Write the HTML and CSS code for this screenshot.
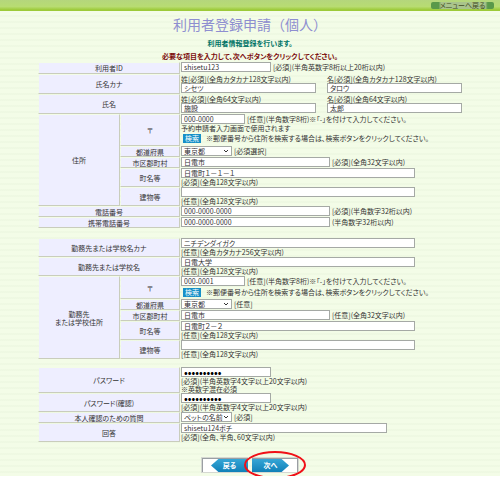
FILE: index.html
```html
<!DOCTYPE html>
<html lang="ja">
<head>
<meta charset="utf-8">
<title>利用者登録申請&#65288;個人&#65289;</title>
<link rel="stylesheet" href="styles.css">
</head>
<body>
<header class="topbar"><a class="menu" href="#">メニューへ戻る</a></header>
<main>
<h1>利用者登録申請&#65288;個人&#65289;</h1>
<p class="lead">利用者情報登録を行います。</p>
<p class="notice">必要な項目を入力して、次へボタンをクリックしてください。</p>
<form>
<table>
<colgroup><col class="c1"><col class="c2"><col></colgroup>
<tr class="id"><th colspan="2"><label for="uid">利用者ID</label></th><td><div class="line"><input class="w-id" id="uid" value="shisetu123"><span>[必須](半角英数字8桁以上20桁以内)</span></div></td></tr>
<tr class="name"><th colspan="2">氏名カナ</th><td><div class="pair"><label>姓[必須](全角カタカナ128文字以内)<input value="シセツ"></label><label>名[必須](全角カタカナ128文字以内)<input value="タロウ"></label></div></td></tr>
<tr class="name"><th colspan="2">氏名</th><td><div class="pair"><label>姓[必須](全角64文字以内)<input value="施設"></label><label>名[必須](全角64文字以内)<input value="太郎"></label></div></td></tr>
<tr class="zip-long"><th rowspan="5">住所</th><th><label for="zip">〒</label></th><td><div class="line"><input class="w-zip" id="zip" value="000-0000"><span>[任意](半角数字8桁)※「-」を付けて入力してください。</span></div><div>予約申請者入力画面で使用されます</div><div class="find"><button type="button">検索</button><span>※郵便番号から住所を検索する場合は、検索ボタンをクリックしてください。</span></div></td></tr>
<tr class="single"><th><label for="pref">都道府県</label></th><td><div class="line"><select id="pref"><option>東京都</option></select><span>[必須選択]</span></div></td></tr>
<tr class="single"><th><label for="city">市区郡町村</label></th><td><div class="line"><input class="w-mid" id="city" value="日電市"><span>[必須](全角32文字以内)</span></div></td></tr>
<tr class="double"><th><label for="town">町名等</label></th><td><input class="w-long" id="town" value="日電町&#65297;&#65293;&#65297;&#65293;&#65297;"><div>[必須](全角128文字以内)</div></td></tr>
<tr class="double"><th><label for="bldg">建物等</label></th><td><input class="w-long" id="bldg"><div>[任意](全角128文字以内)</div></td></tr>
<tr class="single"><th colspan="2"><label for="tel">電話番号</label></th><td><div class="line"><input class="w-mid" id="tel" value="000-0000-0000"><span>[必須](半角数字32桁以内)</span></div></td></tr>
<tr class="single"><th colspan="2"><label for="mobile">携帯電話番号</label></th><td><div class="line"><input class="w-mid" id="mobile" value="000-0000-0000"><span>(半角数字32桁以内)</span></div></td></tr>
</table>
<table class="work">
<colgroup><col class="c1"><col class="c2"><col></colgroup>
<tr class="double"><th colspan="2"><label for="workkana">勤務先または学校名カナ</label></th><td><input class="w-long" id="workkana" value="ニチデンダイガク"><div>[任意](全角カタカナ256文字以内)</div></td></tr>
<tr class="double"><th colspan="2"><label for="work">勤務先または学校名</label></th><td><input class="w-long" id="work" value="日電大学"><div>[任意](全角128文字以内)</div></td></tr>
<tr class="zip-short"><th rowspan="5">勤務先<br>または学校住所</th><th><label for="wzip">〒</label></th><td><div class="line"><input class="w-zip" id="wzip" value="000-0001"><span>[任意](半角数字8桁)※「-」を付けて入力してください。</span></div><div class="find"><button type="button">検索</button><span>※郵便番号から住所を検索する場合は、検索ボタンをクリックしてください。</span></div></td></tr>
<tr class="single"><th><label for="wpref">都道府県</label></th><td><div class="line"><select id="wpref"><option>東京都</option></select><span>[任意]</span></div></td></tr>
<tr class="single"><th><label for="wcity">市区郡町村</label></th><td><div class="line"><input class="w-mid" id="wcity" value="日電市"><span>[任意](全角32文字以内)</span></div></td></tr>
<tr class="double"><th><label for="wtown">町名等</label></th><td><input class="w-long" id="wtown" value="日電町&#65298;&#65293;&#65298;"><div>[任意](全角128文字以内)</div></td></tr>
<tr class="double"><th><label for="wbldg">建物等</label></th><td><input class="w-long" id="wbldg"><div>[任意](全角128文字以内)</div></td></tr>
</table>
<table>
<colgroup><col class="c1"><col class="c2"><col></colgroup>
<tr class="triple"><th colspan="2"><label for="pw">パスワード</label></th><td><input class="w-id" type="password" id="pw" value="abcdefghij"><div>[必須](半角英数字4文字以上20文字以内)</div><div>※英数字混在必須</div></td></tr>
<tr class="double"><th colspan="2"><label for="pw2">パスワード(確認)</label></th><td><input class="w-id" type="password" id="pw2" value="abcdefghij"><div>[必須](半角英数字4文字以上20文字以内)</div></td></tr>
<tr class="single"><th colspan="2"><label for="q">本人確認のための質問</label></th><td><div class="line"><select id="q"><option>ペットの名前</option></select><span>[必須]</span></div></td></tr>
<tr class="double"><th colspan="2"><label for="ans">回答</label></th><td><input class="w-ans" id="ans" value="shisetu124ポチ"><div>[必須](全角、半角、60文字以内)</div></td></tr>
</table>
<div class="actions">
<button type="button" class="nav back"><span>戻る</span></button>
<div class="marked">
<button type="button" class="nav next"><span>次へ</span></button>
<svg class="ring" viewBox="0 0 64 30" aria-hidden="true"><ellipse cx="32" cy="15" rx="30" ry="13" fill="none" stroke="#f01018" stroke-width="2"/></svg>
</div>
</div>
</form>
</main>
</body>
</html>
```

FILE: styles.css
```css
* { box-sizing: border-box; }
body {
  margin: 0;
  background: #fff;
  color: #333;
  font: 7px/8px "Noto Sans CJK JP", sans-serif;
  font-feature-settings: "palt";
}
.topbar {
  display: flex;
  justify-content: flex-end;
  height: 11px;
  padding: 2px 6px 0 0;
  background: linear-gradient(#b4d67c, #b8dc72 60%, #9cca38 90%);
}
.menu {
  width: 63px;
  height: 7px;
  border-radius: 2px;
  background: linear-gradient(90deg, #5a994a 12%, #a9c38c 16%, #a9c38c 86%, #5a994a 90%);
  color: #3f4a20;
  line-height: 7px;
  text-align: center;
  text-decoration: none;
}
main {
  padding: 3px 38px;
  background: repeating-linear-gradient(#f3fce7 0, #f3fce7 4px, #eaf5de 5px, #f3fce7 6px);
}
h1 {
  margin: 0;
  color: #8e8ed0;
  font-size: 14px;
  font-weight: 400;
  font-feature-settings: normal;
  line-height: 20px;
  text-align: center;
}
p { margin: 0; font-weight: 700; text-align: center; }
.lead { padding-top: 5px; color: #007466; }
.notice { padding: 5px 0 2px; color: #7c0c0c; }
table { width: 100%; table-layout: fixed; border-spacing: 0; margin-bottom: 10px; }
.work { margin-bottom: 8px; }
.c1 { width: 82px; }
.c2 { width: 60px; }
th {
  padding: 0;
  border: 1px solid transparent;
  border-right-color: #c9cdbc;
  border-bottom-color: #c9cdbc;
  background: #eeeeff;
  background-clip: padding-box;
  font-weight: 400;
  line-height: 8px;
}
td { padding: 0 0 0 1px; vertical-align: top; white-space: nowrap; }
.id { height: 12px; }
.name { height: 20px; }
.zip-long { height: 32px; }
.zip-short { height: 23px; }
.single { height: 11px; }
.double { height: 19px; }
.triple { height: 26px; }
.line, .find { display: flex; align-items: center; gap: 2px; height: 10px; }
.find { gap: 5px; height: 12px; padding-left: 2px; }
.pair { display: flex; gap: 11px; padding-top: 1px; }
.pair label { width: 135px; }
input, select {
  display: block;
  height: 10px;
  margin: 0;
  padding: 0 2px;
  border: 1px solid #a5a9a5;
  border-radius: 0;
  background: #fff;
  color: #333;
  font: inherit;
  font-feature-settings: inherit;
}
input[type="password"] { color: #000; font-size: 11px; line-height: 8px; }
.pair input { width: 100%; }
.w-id { width: 90px; }
.w-zip { width: 64px; }
.w-mid { width: 149px; }
.w-long { width: 234px; }
.w-ans { width: 206px; }
select {
  width: 51px;
  appearance: none;
  background: #fff url("data:image/svg+xml,%3Csvg xmlns='http://www.w3.org/2000/svg' viewBox='0 0 6 4'%3E%3Cpath d='M1 1l2 2 2-2' fill='none' stroke='%23333'/%3E%3C/svg%3E") no-repeat right 2px center / 6px 4px;
}
button { margin: 0; padding: 0; border: 0; font: inherit; color: #fff; }
.find button { width: 18px; height: 9px; background: #1690c8; line-height: 8px; }
.actions { display: flex; justify-content: center; gap: 4px; margin-top: 15px; }
.nav {
  display: flex;
  width: 47px;
  height: 16px;
  padding: 1px;
  border: 1px solid #d5d8d2;
  background: #fff;
  box-shadow: inset 1px 1px #9a9fa3;
}
.nav span {
  width: 37px;
  height: 13px;
  background: linear-gradient(#36a6d6, #1080b8);
  font-weight: 700;
  line-height: 13px;
}
.back { justify-content: flex-end; border-right: 0; padding-right: 0; }
.back span { clip-path: polygon(0 50%, 20% 0, 100% 0, 100% 100%, 20% 100%); }
.next { border-left: 0; padding-left: 0; box-shadow: inset -1px 1px #9a9fa3; }
.next span { clip-path: polygon(0 0, 80% 0, 100% 50%, 80% 100%, 0 100%); }
.marked { position: relative; }
.ring { position: absolute; left: -9px; top: -7px; width: 64px; height: 30px; pointer-events: none; }
```
